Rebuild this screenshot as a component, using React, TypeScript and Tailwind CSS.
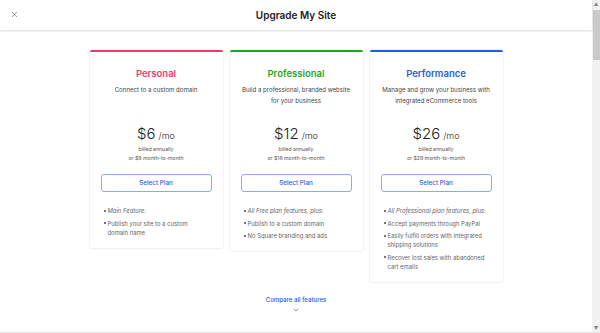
import { X, ChevronDown } from 'lucide-react';

type Plan = {
  name: string;
  color: string;
  border: string;
  blurb: string[];
  price: string;
  monthly: string;
  features: { text: string; lead?: boolean }[];
};

const plans: Plan[] = [
  {
    name: 'Personal',
    color: 'text-[#e4406e]',
    border: 'border-t-[#e4406e]',
    blurb: ['Connect to a custom domain'],
    price: '$6',
    monthly: 'or $9 month-to-month',
    features: [{ text: 'Main Feature:', lead: true }, { text: 'Publish your site to a custom domain name' }]
  },
  {
    name: 'Professional',
    color: 'text-[#1fa51f]',
    border: 'border-t-[#1fa51f]',
    blurb: ['Build a professional, branded website', 'for your business'],
    price: '$12',
    monthly: 'or $16 month-to-month',
    features: [
      { text: 'All Free plan features, plus:', lead: true },
      { text: 'Publish to a custom domain' },
      { text: 'No Square branding and ads' }
    ]
  },
  {
    name: 'Performance',
    color: 'text-[#1d5fd8]',
    border: 'border-t-[#1d5fd8]',
    blurb: ['Manage and grow your business with', 'integrated eCommerce tools'],
    price: '$26',
    monthly: 'or $29 month-to-month',
    features: [
      { text: 'All Professional plan features, plus:', lead: true },
      { text: 'Accept payments through PayPal' },
      { text: 'Easily fulfill orders with integrated shipping solutions' },
      { text: 'Recover lost sales with abandoned cart emails' }
    ]
  }
];

function PlanCard({ plan }: { plan: Plan }) {
  return (
    <div className={`w-[133px] rounded-[2px] border-t-2 ${plan.border} bg-white pb-[11px] text-center shadow-[0_0_2px_rgba(0,0,0,0.18)]`}>
      <h2 className={`pt-[15px] text-[9.5px] leading-[14px] font-semibold ${plan.color}`}>{plan.name}</h2>
      <div className="mt-[3px] h-[22px] text-[6.1px] leading-[11px] text-[#444]">
        {plan.blurb.map((line) => (
          <div key={line}>{line}</div>
        ))}
      </div>
      <div className="mt-[18px] flex h-[20px] items-baseline justify-center gap-[3px] leading-[20px] text-[#222]">
        <span className="text-[15px] font-light">{plan.price}</span>
        <span className="text-[9px] font-light">/mo</span>
      </div>
      <div className="mt-[1px] text-[5.2px] leading-[9px] text-[#555]">billed annually</div>
      <div className="text-[5.2px] leading-[9px] text-[#555]">{plan.monthly}</div>
      <div className="px-[11px] pt-[11px]">
        <button className="block h-[18px] w-full rounded-[3px] border border-[#8fa8e6] bg-white text-[6.3px] leading-[16px] font-medium text-[#2a5bd7]">Select Plan</button>
      </div>
      <ul className="mt-[14px] flex flex-col gap-[3.5px] pl-[14px] pr-[13px] text-left text-[5.9px] leading-[9px] text-[#666]">
        {plan.features.map((f) => (
          <li key={f.text} className="flex gap-[2px]">
            <span className="mt-[3.5px] h-[2px] w-[2px] shrink-0 rounded-full bg-[#444]" />
            <span className={f.lead ? 'whitespace-nowrap italic' : ''}>{f.text}</span>
          </li>
        ))}
      </ul>
    </div>
  );
}

export default function App() {
  return (
    <div className="flex h-[333px] w-[600px] overflow-hidden border-b border-[#e2e2e2] bg-white font-['Inter',sans-serif]">
      <div className="flex flex-1 flex-col">
        <header className="relative flex h-[30px] shrink-0 items-center justify-center bg-white shadow-[0_1px_2px_rgba(0,0,0,0.15)]">
          <X size={9} strokeWidth={1.5} className="absolute left-[10px] top-[10px] text-[#555]" />
          <h1 className="text-[10px] font-semibold text-[#222]">Upgrade My Site</h1>
        </header>
        <main className="flex flex-1 flex-col items-center pt-[20px]">
          <div className="flex items-start gap-[7px]">
            {plans.map((p) => (
              <PlanCard key={p.name} plan={p} />
            ))}
          </div>
          <a className="mt-[13px] text-[6.1px] leading-[9px] font-medium text-[#2a5bd7]">Compare all features</a>
          <ChevronDown size={8} strokeWidth={2} className="mt-[2px] text-[#2a5bd7]" />
        </main>
      </div>
      <div className="flex w-[8px] flex-col items-center bg-[#f1f1f1]">
        <span className="mt-[1px] text-[5px] leading-[6px] text-[#888]">▲</span>
        <div className="mt-[3px] h-[50px] w-[7px] bg-[#c9c9c9]" />
        <div className="flex-1" />
        <span className="mb-[1px] text-[5px] leading-[6px] text-[#888]">▼</span>
      </div>
    </div>
  );
}
